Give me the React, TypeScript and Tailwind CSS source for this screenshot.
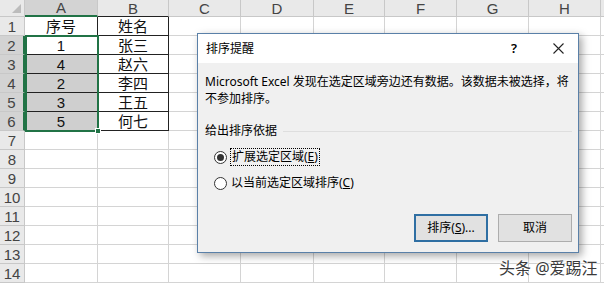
import * as React from 'react';

const COLS = [
  { key: 'A', w: 'w-[73px]' },
  { key: 'B', w: 'w-[71px]' },
  { key: 'C', w: 'w-[72px]' },
  { key: 'D', w: 'w-[73px]' },
  { key: 'E', w: 'w-[71px]' },
  { key: 'F', w: 'w-[72px]' },
  { key: 'G', w: 'w-[72px]' },
  { key: 'H', w: 'w-[72px]' },
];

// sheet content: row -> [A, B]
const DATA: Record<number, [string, string]> = {
  1: ['序号', '姓名'],
  2: ['1', '张三'],
  3: ['4', '赵六'],
  4: ['2', '李四'],
  5: ['3', '王五'],
  6: ['5', '何七'],
};

const ROWS = Array.from({ length: 14 }, (_, i) => i + 1);

const cellFont = 'font-["Liberation_Sans","Noto_Sans_CJK_SC",sans-serif]';
const uiFont = 'font-["Noto_Sans","Noto_Sans_CJK_SC",sans-serif]';

function Radio({ checked }: { checked?: boolean }) {
  return (
    <span className="w-[13px] h-[13px] rounded-full border border-[#333] bg-white flex items-center justify-center shrink-0">
      {checked && <span className="w-[7px] h-[7px] rounded-full bg-[#333]" />}
    </span>
  );
}

function SortDialog() {
  return (
    <div
      className={`absolute left-[197px] top-[33px] w-[382px] h-[220px] border border-[#5a80a8] bg-[#f0f0f0] shadow-[3px_3px_8px_rgba(0,0,0,0.35)] flex flex-col text-[12px] text-black ${uiFont}`}
    >
      {/* Title bar */}
      <div className="h-[29px] bg-white flex items-center pl-[8px] pr-[14px] shrink-0">
        <span className="leading-[17px]">排序提醒</span>
        <span className="ml-auto mr-[36px] text-[13px] font-semibold">?</span>
        <svg width="11" height="11" viewBox="0 0 11 11" className="mb-[1px]">
          <path d="M0.5 0.5 L10.5 10.5 M10.5 0.5 L0.5 10.5" stroke="#222" strokeWidth="1.1" />
        </svg>
      </div>

      {/* Body */}
      <div className="flex-1 flex flex-col pl-[7px] pr-[6px] pt-[10px] pb-[10px]">
        <p className="leading-[17px] whitespace-nowrap">
          <span className="block">Microsoft Excel 发现在选定区域旁边还有数据。该数据未被选择，将</span>
          <span className="block">不参加排序。</span>
        </p>

        <div className="mt-[15px] flex items-center">
          <span className="leading-[17px]">给出排序依据</span>
          <span className="flex-1 h-px bg-[#dedede] ml-[6px] mt-[1px]" />
        </div>

        <div className="mt-[9px] ml-[9px] flex items-center gap-[3px] h-[18px]">
          <Radio checked />
          <span className="leading-[16px] px-[1px] border border-dotted border-black">扩展选定区域(<u>E</u>)</span>
        </div>
        <div className="mt-[8px] ml-[9px] flex items-center gap-[4px] h-[18px]">
          <Radio />
          <span className="leading-[16px]">以当前选定区域排序(<u>C</u>)</span>
        </div>

        <div className="mt-auto flex justify-end gap-[10px]">
          <button className="w-[74px] h-[28px] bg-[#e1e1e1] border-2 border-[#2f6fa3] leading-none">
            排序(<u>S</u>)...
          </button>
          <button className="w-[74px] h-[28px] bg-[#e1e1e1] border border-[#adadad] leading-none">
            取消
          </button>
        </div>
      </div>
    </div>
  );
}

export default function App() {
  return (
    <div className="relative w-[604px] h-[285px] overflow-hidden bg-white">
      {/* Column headers */}
      <div className={`flex h-[17px] ${cellFont} text-[15px] text-[#444]`}>
        <div className="w-[25px] h-full bg-[#e9e9e9] border-r border-b border-[#c8c8c8] relative shrink-0">
          <svg width="9" height="9" viewBox="0 0 9 9" className="absolute right-[3px] bottom-[3px]">
            <path d="M9 0 L9 9 L0 9 Z" fill="#bcbcbc" />
          </svg>
        </div>
        {COLS.map((c) => (
          <div
            key={c.key}
            className={`${c.w} h-full shrink-0 flex items-center justify-center leading-none border-r border-[#c8c8c8] ${
              c.key === 'A'
                ? 'bg-[#d3d3d3] border-b-2 border-b-[#217346]'
                : c.key === 'B'
                  ? 'bg-[#e9e9e9] border-b border-b-[#222]'
                  : 'bg-[#e9e9e9] border-b border-b-[#c8c8c8]'
            }`}
          >
            {c.key}
          </div>
        ))}
        <div className="flex-1 h-full bg-[#e9e9e9] border-b border-[#c8c8c8]" />
      </div>

      {/* Rows */}
      {ROWS.map((r) => {
        const row = DATA[r];
        const selected = r >= 2 && r <= 6;
        return (
          <div key={r} className={`flex h-[19px] ${cellFont}`}>
            <div
              className={`w-[25px] h-full shrink-0 flex items-center justify-center text-[15px] leading-none text-[#444] border-b border-[#c8c8c8] ${
                selected ? 'bg-[#d3d3d3] border-r-2 border-r-[#217346]' : 'bg-[#e9e9e9] border-r border-r-[#c8c8c8]'
              }`}
            >
              {r}
            </div>
            {COLS.map((c, ci) => {
              const inTable = row && ci < 2;
              const grey = c.key === 'A' && r >= 3 && r <= 6;
              const border = inTable
                ? 'border-r border-b border-[#222]'
                : row && ci === 2
                  ? 'border-r border-b border-[#d4d4d4]'
                  : 'border-r border-b border-[#d4d4d4]';
              return (
                <div
                  key={c.key}
                  className={`${c.w} h-full shrink-0 flex items-center justify-center text-[15px] leading-none text-[#111] ${border} ${
                    grey ? 'bg-[#cfcfcf]' : 'bg-white'
                  }`}
                >
                  {inTable ? row[ci] : ''}
                </div>
              );
            })}
            <div className="flex-1 h-full border-b border-[#d4d4d4]" />
          </div>
        );
      })}

      {/* Selection A2:A6 */}
      <div className="absolute left-[25px] top-[35px] w-[74px] h-[97px] border-2 border-[#217346] pointer-events-none" />
      <div className="absolute left-[95px] top-[128px] w-[6px] h-[6px] bg-[#217346] border border-white" />

      <SortDialog />

      {/* Watermark */}
      <div
        className={`absolute left-[499px] top-[258px] text-[16px] leading-[20px] text-[#3a3a3a] [text-shadow:0_0_2px_#fff,0_0_2px_#fff] ${uiFont}`}
      >
        头条 @爱踢汪
      </div>
    </div>
  );
}
